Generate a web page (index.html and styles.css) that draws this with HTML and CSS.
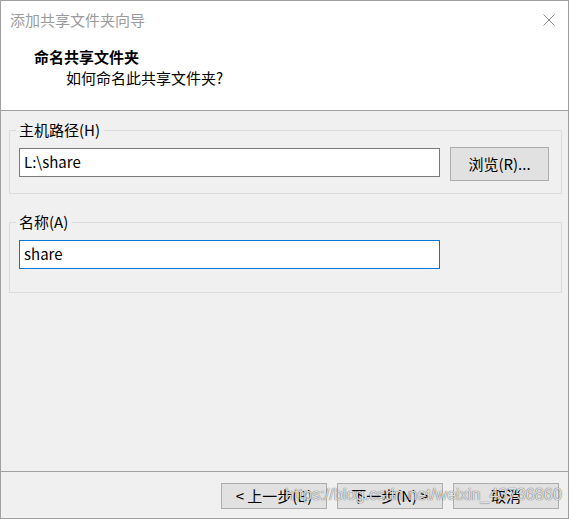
FILE: index.html
```html
<!DOCTYPE html>
<html lang="zh-CN">
<head>
<meta charset="utf-8">
<title>添加共享文件夹向导</title>
<link rel="stylesheet" href="styles.css">
</head>
<body>
<div class="window">
  <div class="header">
    <div class="titlebar">
      <span class="title">添加共享文件夹向导</span>
      <svg class="close" width="12" height="12" viewBox="0 0 12 12"><path d="M0.5 0.5 L11.5 11.5 M11.5 0.5 L0.5 11.5" stroke="#8a8a8a" stroke-width="1" fill="none"/></svg>
    </div>
    <div class="heading">命名共享文件夹</div>
    <div class="subheading">如何命名此共享文件夹?</div>
  </div>
  <div class="content">
    <fieldset class="group group-host">
      <legend class="group-label">主机路径(H)</legend>
      <div class="row">
        <div class="textbox">L:\share</div>
        <button class="btn btn-browse">浏览(R)...</button>
      </div>
    </fieldset>
    <fieldset class="group group-name">
      <legend class="group-label">名称(A)</legend>
      <div class="row">
        <div class="textbox focused">share</div>
      </div>
    </fieldset>
  </div>
  <div class="footer">
    <button class="btn btn-nav">&lt; 上一步(B)</button>
    <button class="btn btn-nav">下一步(N) &gt;</button>
    <button class="btn btn-nav">取消</button>
    <div class="watermark">https://blog.csdn.net/weixin_43736860</div>
  </div>
</div>
</body>
</html>
```
FILE: styles.css
```css
html, body {
  margin: 0;
  padding: 0;
  background: #ffffff;
}
body {
  font-family: "Noto Sans CJK SC", "Noto Sans", sans-serif;
  font-size: 15px;
  color: #000;
}
.window {
  width: 567px;
  height: 517px;
  border: 1px solid #a0a0a0;
  background: #f0f0f0;
  display: flex;
  flex-direction: column;
}
.header {
  background: #ffffff;
  height: 109px;
  border-bottom: 1px solid #a0a0a0;
  flex: none;
}
.titlebar {
  height: 37px;
  display: flex;
  align-items: center;
  justify-content: space-between;
  padding: 0 13px 0 9px;
}
.title {
  color: #9b9b9b;
  line-height: 20px;
}
.close {
  display: block;
  margin-top: 1px;
}
.heading {
  font-weight: bold;
  line-height: 20px;
  margin-top: 9px;
  padding-left: 33px;
}
.subheading {
  line-height: 20px;
  margin-top: 1px;
  padding-left: 65px;
}
.content {
  flex: 1;
  display: flex;
  flex-direction: column;
}
.group {
  border: 1px solid #dcdcdc;
  margin: 0 6px 0 8px;
  padding: 9px 11px 12px 9px;
  min-width: 0;
}
.group-host {
  margin-top: 11px;
}
.group-name {
  margin-top: 20px;
  padding-top: 10px;
  padding-bottom: 23px;
}
.group-label {
  line-height: 16px;
  padding: 0 4px 0 3px;
  margin-left: -3px;
}
.row {
  display: flex;
  align-items: flex-start;
  gap: 10px;
}
.textbox {
  width: 411px;
  height: 27px;
  border: 1px solid #7a7a7a;
  background: #fff;
  padding: 0 4px;
  line-height: 25px;
  margin-top: 1px;
  box-sizing: content-box;
}
.group-name .textbox {
  margin-top: 0;
}
.textbox.focused {
  border-color: #0078d7;
}
.btn {
  font-family: "Noto Sans CJK SC", "Noto Sans", sans-serif;
  font-size: 15px;
  color: #000;
  background: #e1e1e1;
  border: 1px solid #adadad;
  padding: 0;
  margin: 0;
  box-sizing: border-box;
}
.btn-browse {
  width: 99px;
  height: 34px;
  line-height: 32px;
}
.footer {
  flex: none;
  height: 47px;
  border-top: 1px solid #a0a0a0;
  display: flex;
  justify-content: flex-end;
  align-items: flex-start;
  gap: 10px;
  padding: 11px 9px 0 0;
  box-sizing: border-box;
  position: relative;
}
.btn-nav {
  width: 106px;
  height: 26px;
  line-height: 24px;
}
.watermark {
  position: absolute;
  left: 284px;
  top: 14px;
  font-family: "Liberation Sans", Arial, sans-serif;
  font-size: 16.3px;
  line-height: 16px;
  color: rgba(250, 250, 250, 0.85);
  text-shadow: 0 0 1px rgba(0, 0, 0, 0.6), 0 0 1px rgba(0, 0, 0, 0.3);
  white-space: nowrap;
  pointer-events: none;
}
```
